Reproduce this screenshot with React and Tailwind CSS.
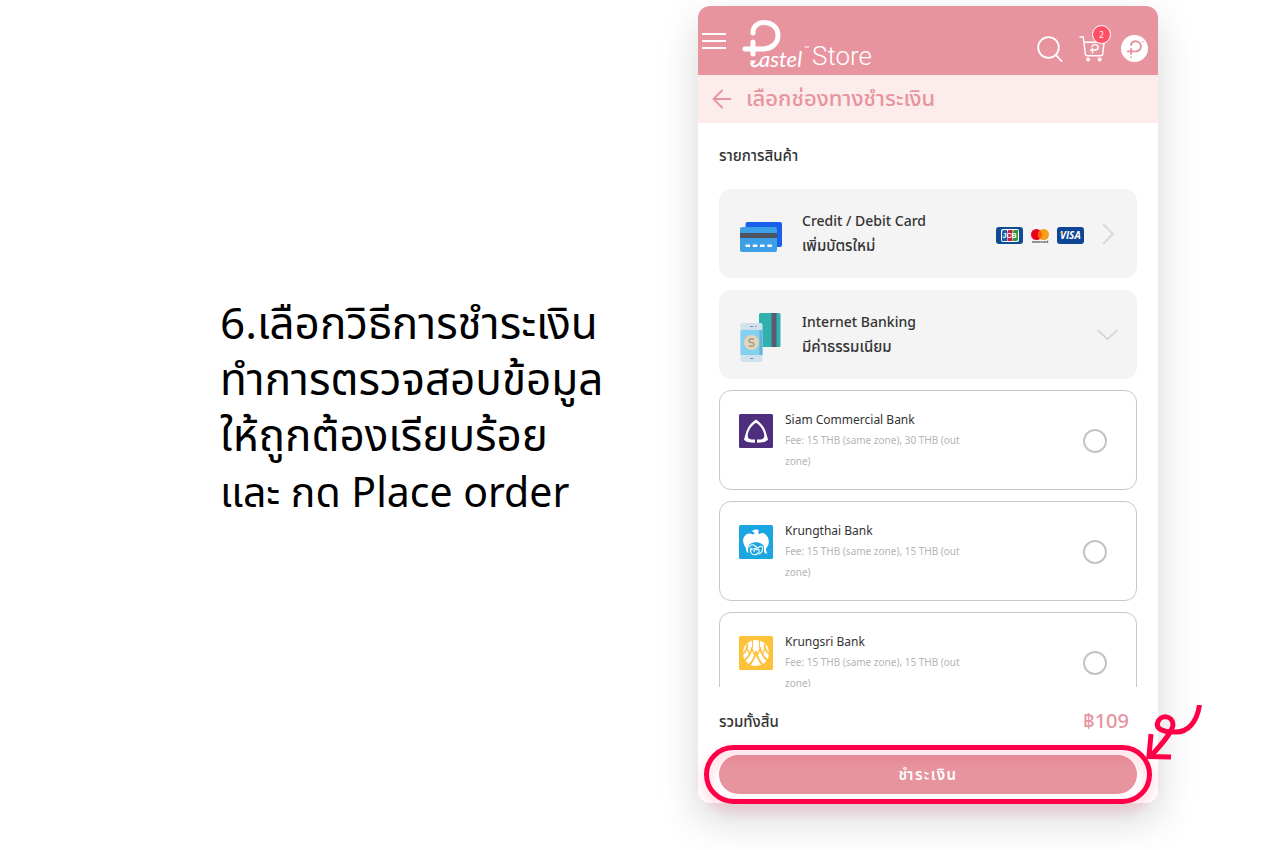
import React, { useState } from 'react'

const banks = [
  { id: 'scb', name: 'Siam Commercial Bank', fee: 'Fee: 15 THB (same zone), 30 THB (out zone)', Logo: ScbLogo },
  { id: 'ktb', name: 'Krungthai Bank', fee: 'Fee: 15 THB (same zone), 15 THB (out zone)', Logo: KtbLogo },
  { id: 'bay', name: 'Krungsri Bank', fee: 'Fee: 15 THB (same zone), 15 THB (out zone)', Logo: BayLogo },
]

function PastelLogo(){
  return (
    <svg width="70" height="56" viewBox="0 0 70 56" fill="none" stroke="#fff" strokeLinecap="round">
      <path d="M11 15V13A10.500 10 0 0 1 21.500 4.500C30.500 4.500 36 10 36 17.500S30 30.500 22 31H3" strokeWidth="5" />
      <path d="M11 24V36" strokeWidth="5" />
      <path d="M9 45.500C11 50 15 49 19 44" strokeWidth="2" />
      <path d="M8 42.500H14L11 47Z" fill="#fff" stroke="none" />
      <text x="17" y="49" fontSize="22" fontStyle="italic" fill="#fff" stroke="none" fontFamily="Lato, sans-serif">astel</text>
      <text x="62" y="33" fontSize="7" fill="#fff" stroke="none" fontFamily="Lato, sans-serif">™</text>
    </svg>
  )
}

function CartIcon(){
  return (
    <svg width="26" height="27" viewBox="0 0 27 27" fill="none" stroke="#fff" strokeWidth="1.500" strokeLinecap="round" strokeLinejoin="round">
      <path d="M1 1.500H4.500L6.500 19Q6.800 21 8.500 21H22.500Q24.300 21 24.700 19L26 7H5.200" />
      <path d="M13.500 11.500Q14 9.500 16.500 9.500C21 9.500 21 15 16.500 15H12M14 13.500V18" />
      <circle cx="9.500" cy="25" r="1.300" fill="#fff" />
      <circle cx="21.500" cy="25" r="1.300" fill="#fff" />
    </svg>
  )
}

function ProfileIcon(){
  return (
    <svg width="27" height="27" viewBox="0 0 28 28" fill="none">
      <circle cx="14" cy="14" r="14" fill="#fff" />
      <g stroke="#e7949f" strokeWidth="2" strokeLinecap="round">
        <path d="M10.500 10.500V9.500Q11.500 6.500 15 6.500C22.500 6.500 22.500 17 15 17H7" />
        <path d="M10.500 14.500V19.500" />
      </g>
      <circle cx="10.500" cy="23" r="0.900" fill="#e7949f" />
      <path d="M21.500 7H24" stroke="#e7949f" strokeWidth="0.800" />
    </svg>
  )
}

function CreditCardIcon(){
  return (
    <svg className="mt-2" width="42" height="31" viewBox="0 0 42 31">
      <rect x="5.500" y="0" width="36.500" height="25" rx="2" fill="#1b60ea" />
      <rect x="0" y="5" width="37" height="25" rx="2" fill="#3d9fe5" />
      <rect x="0" y="11" width="37" height="5" fill="#4e5462" />
      <path d="M5.500 23.800H32" stroke="#fff" strokeWidth="2.600" strokeDasharray="4.500 2.800" />
    </svg>
  )
}

function BankingIcon(){
  return (
    <svg className="mt-1.5" width="42" height="49" viewBox="0 0 42 49">
      <rect x="19" y="0" width="21.500" height="34" rx="1.500" fill="#30b1ae" />
      <rect x="31.500" y="0" width="5" height="34" fill="#5a5b6e" />
      <rect x="0.500" y="10" width="22" height="39" rx="2" fill="#d0e2ee" />
      <rect x="0.500" y="17" width="22" height="25" fill="#84d0f0" />
      <path d="M19.500 17H22.500V42H19.500Z" fill="#68b2d2" />
      <path d="M10 13.500H13M15 13.500H16.500M10 45.500H13.500" stroke="#8294a4" />
      <circle cx="11.500" cy="29.500" r="7.500" fill="#e6d4b8" />
      <path d="M14 26H10.700Q9 26 9 27.700T10.700 29.500H12.300Q14 29.500 14 31.300T12.300 33H9" fill="none" stroke="#9a9c94" strokeWidth="1.400" />
    </svg>
  )
}

function CardBrands(){
  return (
    <div className="mt-1 flex items-center gap-2">
      <svg width="27" height="17" viewBox="0 0 27 17" role="img" aria-label="JCB">
        <rect width="27" height="17" rx="3" fill="#0f4c94" />
        <rect x="5" y="2" width="18" height="13" rx="2" fill="#fff" />
        <path d="M8 3H11V14H6V5Q6 3 8 3Z" fill="#1f5faa" />
        <path d="M13 3H16.500V14H11.500V5Q11.500 3 13 3Z" fill="#c8203c" />
        <path d="M18.500 3H22V12Q22 14 20 14H17V5Q17 3 18.500 3Z" fill="#2c9a3c" />
        <text x="6.500" y="11" fontSize="7" fontWeight="700" fill="#fff" fontFamily="Liberation Sans, sans-serif">JCB</text>
      </svg>
      <svg width="18" height="17" viewBox="0 0 18 17" role="img" aria-label="mastercard">
        <circle cx="5.500" cy="7.500" r="5.500" fill="#eb001b" />
        <circle cx="12.500" cy="7.500" r="5.500" fill="#f79e1b" />
        <path d="M9 3.200A5.500 5.500 0 0 1 9 11.800A5.500 5.500 0 0 1 9 3.200Z" fill="#ff5f00" />
        <text x="1" y="16" fontSize="3" fontWeight="700" fill="#333" fontFamily="Liberation Sans, sans-serif">mastercard</text>
      </svg>
      <svg width="27" height="17" viewBox="0 0 27 17" role="img" aria-label="VISA">
        <rect width="27" height="17" rx="3" fill="#0e4595" />
        <text x="3" y="12" fontSize="10" fontWeight="700" fontStyle="italic" fill="#fff" fontFamily="Open Sans, sans-serif">VISA</text>
        <path d="M2.500 5H5.500L6 7.200Z" fill="#f2ae14" />
      </svg>
    </div>
  )
}

function ScbLogo(){
  return (
    <svg width="34" height="34" viewBox="0 0 34 34">
      <rect width="34" height="34" rx="1.500" fill="#4e2e7f" />
      <path fillRule="evenodd" fill="#fff" d="M17 5.500C20.500 7.800 24.500 11.500 26.500 17L29 25.500Q27 28.800 18 28.800V25.500H21.500C25 25 25.500 23 25.200 21C24.500 15.500 21 11.500 17 8.800C13 11.500 9.500 15.500 8.800 21C8.500 23 9 25 12.500 25.500H16V28.800Q7 28.800 5 25.500L7.500 17C9.500 11.500 13.500 7.800 17 5.500Z" />
    </svg>
  )
}

function KtbLogo(){
  return (
    <svg width="34" height="34" viewBox="0 0 34 34">
      <rect width="34" height="34" rx="1.500" fill="#1ba5e1" />
      <path fill="#fff" d="M13 6.500C14 4.500 18 3.500 20 5.500L19 7L20.500 9.500C22 7.500 24 7.500 26 9C29 11 30.500 15 29.500 19C29 22 27 22 27 25Q27 27 28.500 28.500Q24.500 29 25 24.500Q25.500 20 22 18.500C19 16.500 14 17 11 19Q8 21.500 9.500 28Q6.500 27 7 23C4.500 20 3.500 16 4.500 13C6 9 10 7 14 9.500L16 8Z" />
      <path fill="none" stroke="#fff" strokeWidth="1.100" strokeLinecap="round" d="M10 22Q13 18 16 21T20 22Q23 20 23.500 23Q24 27 20 29M12 23Q10.500 28 14 29.500Q18 30.500 20 27Q21 24 18 24T15 26.500M12 25Q16 22 18 25" />
    </svg>
  )
}

function BayLogo(){
  return (
    <svg width="34" height="34" viewBox="0 0 34 34">
      <rect width="34" height="34" rx="1.500" fill="#fdc23a" />
      <circle cx="17" cy="17" r="13" fill="#fff" />
      <g fill="none" stroke="#fdc23a" strokeWidth="1.800">
        <path d="M17 15C16 21 14 26 9 30M17 15C18 21 20 26 25 30" />
        <path d="M13.500 4V11M20.500 4V11" strokeWidth="1" />
        <path d="M13 11C12.500 16 10 21 5 25M21 11C21.500 16 24 21 29 25" />
        <path d="M8.500 8C8.500 12 6.500 16 3 18.500M25.500 8C25.500 12 27.500 16 31 18.500" />
        <path d="M13 13L15.500 19M21 13L18.500 19M8.500 13L10.500 18M25.500 13L23.500 18" strokeWidth="1.400" />
      </g>
    </svg>
  )
}

function BankOption({ bank, checked, onChange }){
  const { Logo } = bank
  return (
    <label className="flex h-[100px] shrink-0 cursor-pointer items-start rounded-xl border border-[#c8c8c8] pl-[19px] pr-[29px] pt-[23px]">
      <Logo />
      <span className="ml-3 block flex-1">
        <span className="-mt-1 block text-xs leading-5 text-[#333]">{bank.name}</span>
        <span className="block max-w-[190px] text-[10px] leading-[21px] text-[#b5b5b5]">{bank.fee}</span>
      </span>
      <input
        type="radio"
        name="bank"
        value={bank.id}
        checked={checked}
        onChange={onChange}
        className="mt-[15px] size-6 appearance-none rounded-full border-2 border-[#c4c4c4] bg-white checked:border-[#e7949f] checked:bg-[#e7949f]"
      />
    </label>
  )
}

export default function App(){
  const [bank, setBank] = useState('')

  return (
    <main className="flex min-h-screen items-start justify-between overflow-hidden bg-white pl-[220px] pr-[126px] pt-[6px] font-['Noto_Sans','Noto_Sans_Thai','Noto_Sans_Thai_UI',sans-serif]">
      <h1 className="mt-72 text-[44px] leading-[56px] text-black">
        6.เลือกวิธีการชำระเงิน<br />
        ทำการตรวจสอบข้อมูล<br />
        ให้ถูกต้องเรียบร้อย<br />
        <span className="text-[41px]">และ กด Place order</span>
      </h1>

      <section className="w-full max-w-[460px] rounded-xl bg-white shadow-[0_16px_40px_rgba(0,0,0,0.16)]">
        <header className="flex h-[69px] items-center rounded-t-xl bg-[#e7949f] pl-1 pr-[10px] text-white">
          <button aria-label="Menu" className="flex w-6 flex-col gap-[5px]">
            <span className="h-0.5 w-full bg-white" />
            <span className="h-0.5 w-full bg-white" />
            <span className="h-0.5 w-full bg-white" />
          </button>
          <a href="#" className="ml-4 flex flex-1 items-center pt-2.5">
            <PastelLogo />
            <span className="pt-5 font-[Roboto] text-[26px] font-light leading-7">Store</span>
          </a>
          <div className="flex items-center gap-4 pt-4">
            <button aria-label="Search">
              <svg width="26" height="26" viewBox="0 0 26 26" fill="none" stroke="#fff" strokeWidth="1.800" strokeLinecap="round">
                <circle cx="11.500" cy="11.500" r="10.300" />
                <path d="M18.800 18.800L24.500 25" />
              </svg>
            </button>
            <button aria-label="Cart" className="relative">
              <CartIcon />
              <span className="absolute -right-1.5 -top-2.5 flex size-[19px] items-center justify-center rounded-full border border-white bg-[#ff5065] text-[8px]">2</span>
            </button>
            <button aria-label="Profile"><ProfileIcon /></button>
          </div>
        </header>

        <div className="flex h-12 items-center gap-[14px] bg-[#fceceb] px-[14px] text-[#e7949f]">
          <a href="#" aria-label="Back">
            <svg width="20" height="20" viewBox="0 0 20 20" fill="none" stroke="currentColor" strokeWidth="1.800" strokeLinecap="round" strokeLinejoin="round">
              <path d="M18.500 10H1.500M10 1.500L1.500 10L10 18.500" />
            </svg>
          </a>
          <h2 className="pb-1 text-[22px] font-medium leading-7">เลือกช่องทางชำระเงิน</h2>
        </div>

        <div className="px-[21px] pt-5 text-[#333]">
          <h3 className="text-[15px] font-medium leading-6">รายการสินค้า</h3>

          <button className="mt-[22px] flex h-[89px] w-full items-center rounded-xl bg-[#f4f4f4] pl-[21px] pr-[23px] text-left">
            <CreditCardIcon />
            <span className="ml-5 flex-1 pb-0.5 text-sm font-medium leading-6">
              <span className="block">Credit / Debit Card</span>
              <span className="block text-[15px] leading-6">เพิ่มบัตรใหม่</span>
            </span>
            <CardBrands />
            <svg className="ml-[18px]" width="12" height="22" viewBox="0 0 12 22" fill="none" stroke="#d8d8d8" strokeWidth="1.800">
              <path d="M1 1L11 11L1 21" />
            </svg>
          </button>

          <button className="mt-3 flex h-[89px] w-full items-center rounded-xl bg-[#f4f4f4] pl-[21px] pr-[19px] text-left">
            <BankingIcon />
            <span className="ml-5 flex-1 pb-0.5 text-sm font-medium leading-6">
              <span className="block">Internet Banking</span>
              <span className="block text-[15px] leading-6">มีค่าธรรมเนียม</span>
            </span>
            <svg width="21" height="12" viewBox="0 0 21 12" fill="none" stroke="#d8d8d8" strokeWidth="1.800">
              <path d="M0.500 1L10.500 10L20.500 1" />
            </svg>
          </button>

          <div className="mt-[11px] flex max-h-[297px] flex-col gap-[11px] overflow-y-auto [scrollbar-width:none]">
            {banks.map(b => (
              <BankOption key={b.id} bank={b} checked={bank === b.id} onChange={()=>setBank(b.id)} />
            ))}
          </div>
        </div>

        <footer className="px-[21px] pb-[9px] pt-5">
          <div className="flex items-center justify-between pr-2">
            <span className="text-[15px] font-medium text-[#333]">รวมทั้งสิ้น</span>
            <span className="text-xl font-medium leading-7 text-[#e7949f]">฿109</span>
          </div>
          <div className="relative mt-5">
            <button className="h-[39px] w-full rounded-full bg-[#e7949f] text-[15px] font-semibold tracking-widest text-white">ชำระเงิน</button>
            <div className="pointer-events-none absolute -inset-x-[15px] -inset-y-[10px] rounded-full border-[5px] border-[#ff0048] drop-shadow-[0_6px_6px_rgba(255,0,72,0.25)]" />
            <svg className="pointer-events-none absolute -right-[66px] -top-[50px]" width="58" height="58" viewBox="0 0 58 58" fill="none" stroke="#ff0048" strokeWidth="5">
              <path d="M54.500 0C52 17 43 28 29 27C18 27 11 24 12.500 18C15 9 28 10 28 20C27 28 15 41 5 52" />
              <path d="M6 29L4 51.500L26 52" />
            </svg>
          </div>
        </footer>
      </section>
    </main>
  )
}
